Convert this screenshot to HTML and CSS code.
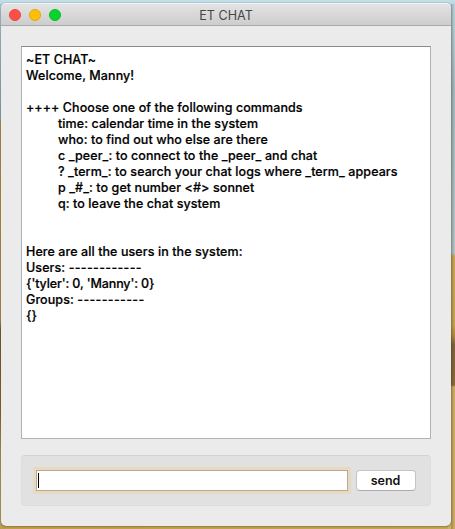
FILE: index.html
```html
<!DOCTYPE html>
<html lang="en">
<head>
<meta charset="utf-8">
<title>ET CHAT</title>
<link rel="stylesheet" href="styles.css">
</head>
<body>
<main class="window">
  <header class="titlebar">
    <div class="lights"><span class="light red"></span><span class="light yellow"></span><span class="light green"></span></div>
    <h1 class="title">ET CHAT</h1>
  </header>
  <section class="log">
    <p>~ET CHAT~</p>
    <p>Welcome, Manny!</p>
    <p class="blank"></p>
    <p><span class="plus">++++</span> Choose one of the following commands</p>
    <p class="cmd">time: calendar time in the system</p>
    <p class="cmd">who: to find out who else are there</p>
    <p class="cmd">c _peer_: to connect to the _peer_ and chat</p>
    <p class="cmd">? _term_: to search your chat logs where _term_ appears</p>
    <p class="cmd">p _#_: to get number &lt;#&gt; sonnet</p>
    <p class="cmd">q: to leave the chat system</p>
    <p class="blank"></p>
    <p class="blank"></p>
    <p>Here are all the users in the system:</p>
    <p>Users: <span class="dashes">------------</span></p>
    <p class="dict">{'tyler': 0, 'Manny': 0}</p>
    <p>Groups: <span class="dashes">-----------</span></p>
    <p class="dict">{}</p>
  </section>
  <form class="composer">
    <div class="entry"><span class="caret"></span></div>
    <button class="send" type="button">send</button>
  </form>
</main>
</body>
</html>
```

FILE: styles.css
```css
* { box-sizing: border-box; }

body {
  margin: 0;
  height: 529px;
  padding: 3px 4px 3px 1px;
  overflow: hidden;
  font-family: Inter, "Liberation Sans", sans-serif;
  background:
    linear-gradient(#c3dfea, #b9d6e1) 0 0 / 100% 4px no-repeat,
    linear-gradient(#a9c8d3 0, #86a2ac 120px, #b48d40 122px, #b88d3c 220px, #a98a4c 320px, #795a2b 330px, #866127 410px, #a99050 450px, #b99f55 100%) 0 0 / 5px 100% no-repeat,
    linear-gradient(90deg, rgba(60, 50, 30, .3), rgba(60, 50, 30, 0) 4px) 451px 0 / 4px 100% no-repeat,
    linear-gradient(#bddae5 0, #a5bdc2 90px, #b4c9cb 253px, #cda958 256px, #c9a651 325px, #b68e3c 335px, #80653a 345px, #8b6c37 385px, #d1b064 387px, #d1b163 100%) 448px 0 / 7px 100% no-repeat,
    linear-gradient(90deg, #c5a04a, #c7a95b) 0 0;
}

.window {
  height: 523px;
  display: flex;
  flex-direction: column;
  background: #ebebeb;
  border-radius: 5px;
  box-shadow: 0 0 1px rgba(40, 50, 50, .65), 0 1px 2px rgba(50, 40, 20, .3);
}

.titlebar {
  flex: none;
  height: 23px;
  display: grid;
  grid-template-columns: 60px 1fr 60px;
  align-items: center;
  border-top: 1px solid #f3f3f3;
  border-bottom: 1px solid #a9a9a9;
  border-radius: 5px 5px 0 0;
  background: linear-gradient(#e3e3e3, #cdcdcd);
}

.lights { display: flex; gap: 8px; padding-left: 8px; }
.light { width: 12px; height: 12px; border-radius: 50%; }
.red { background: #ff5047; border: 1px solid #e5433b; }
.yellow { background: #ffbf08; border: 1px solid #e3a70a; }
.green { background: #07d42c; border: 1px solid #0abb27; }

.title {
  margin: 0;
  padding-top: 2px;
  text-align: center;
  font-size: 12.6px;
  line-height: 16px;
  font-weight: 400;
  color: #464646;
}

.log {
  flex: none;
  margin: 20px 20px 0;
  height: 393px;
  padding: 5px 4px;
  background: #fff;
  border: 1px solid #b2b2b2;
  border-top-color: #8a8a8a;
  font-size: 12.5px;
  line-height: 16px;
  font-weight: 500;
  letter-spacing: .085px;
  -webkit-text-stroke: .2px #000;
  color: #000;
}

.log p { margin: 0; height: 16px; white-space: pre; }
.log .cmd { padding-left: 32px; }
.plus { letter-spacing: 0; }
.dashes { letter-spacing: .33px; }
.log .dict { letter-spacing: -.12px; }

.composer {
  flex: none;
  display: flex;
  gap: 8px;
  height: 51px;
  margin: 16px 20px 0;
  padding: 14px 14px 0;
  background: #e1e1e1;
  border: 1px solid #dddddd;
  border-top-color: #d2d2d2;
  border-radius: 4px;
}

.entry {
  width: 312px;
  height: 21px;
  padding: 2px 1px;
  background: #fff;
  border: 1px solid #b9aa8c;
  box-shadow: 0 0 0 3px #e7dac4;
}

.caret { display: block; width: 1px; height: 15px; background: #000; }

.send {
  width: 60px;
  height: 21px;
  padding: 0 1px 0 0;
  background: #fff;
  border: 1px solid #c4c4c4;
  border-bottom-color: #acacac;
  border-radius: 4px;
  font: 600 12.5px/18px Inter, "Liberation Sans", sans-serif;
  color: #111;
}
```
